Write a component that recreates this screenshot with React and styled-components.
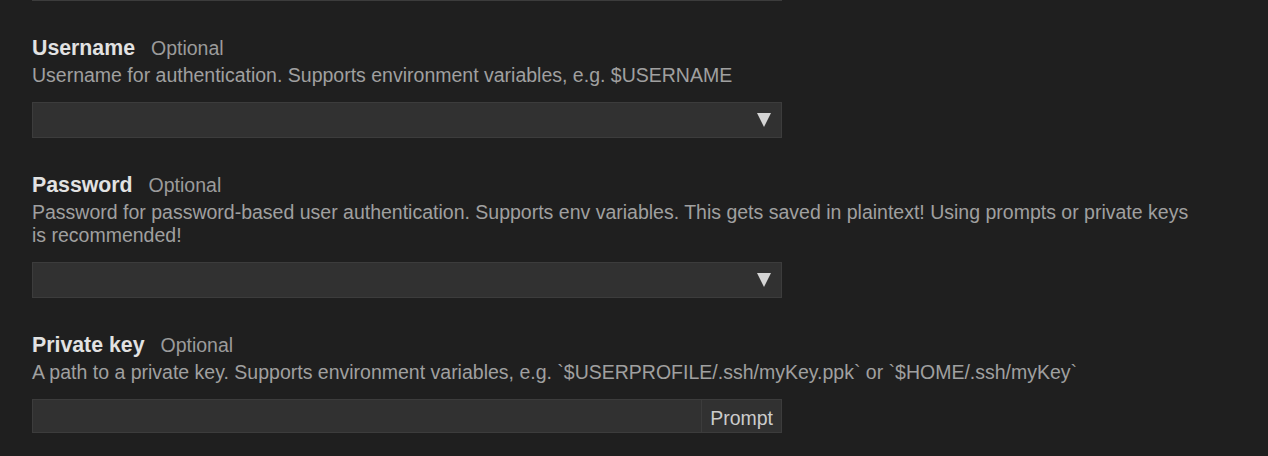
import React from 'react';
import styled, { createGlobalStyle } from 'styled-components';

const GlobalStyle = createGlobalStyle`
  html, body {
    margin: 0;
    padding: 0;
    background: #1f1f1f;
  }
  body {
    font-family: "Liberation Sans", Arial, sans-serif;
  }
`;

const settings = [
  {
    id: 'username',
    title: 'Username',
    description: 'Username for authentication. Supports environment variables, e.g. $USERNAME',
    kind: 'select',
  },
  {
    id: 'password',
    title: 'Password',
    description:
      'Password for password-based user authentication. Supports env variables. This gets saved in plaintext! Using prompts or private keys is recommended!',
    kind: 'select',
  },
  {
    id: 'privateKey',
    title: 'Private key',
    description:
      'A path to a private key. Supports environment variables, e.g. `$USERPROFILE/.ssh/myKey.ppk` or `$HOME/.ssh/myKey`',
    kind: 'prompt',
  },
];

const App = () => {
  return (
    <>
      <GlobalStyle />
      <Page>
        <PrevFieldEdge />
        {settings.map((s) => (
          <Setting key={s.id}>
            <TitleRow>
              <Title>{s.title}</Title>
              <Optional>Optional</Optional>
            </TitleRow>
            <Description>{s.description}</Description>
            {s.kind === 'select' ? (
              <Select>
                <Arrow viewBox="0 0 14 14">
                  <polygon points="0,0 14,0 7,14" />
                </Arrow>
              </Select>
            ) : (
              <InputRow>
                <TextField />
                <PromptButton>Prompt</PromptButton>
              </InputRow>
            )}
          </Setting>
        ))}
      </Page>
    </>
  );
};

const Page = styled.div`
  padding: 0 0 0 32px;
  width: 1170px;
`;

const PrevFieldEdge = styled.div`
  width: 750px;
  height: 1px;
  background: #3c3c3c;
`;

const Setting = styled.section`
  padding-top: 33px;
  display: flex;
  flex-direction: column;
`;

const TitleRow = styled.div`
  display: flex;
  align-items: baseline;
  gap: 16px;
  height: 28px;
  line-height: 28px;
  margin-bottom: 2px;
`;

const Title = styled.span`
  font-size: 21.3px;
  font-weight: bold;
  color: #e2e2e2;
`;

const Optional = styled.span`
  font-size: 19.5px;
  color: #9b9b9b;
`;

const Description = styled.div`
  font-size: 19.5px;
  line-height: 23.5px;
  color: #a0a0a0;
  margin-bottom: 14px;
`;

const Select = styled.div`
  box-sizing: border-box;
  width: 750px;
  height: 36px;
  background: #313131;
  border: 1px solid #3c3c3c;
  display: flex;
  align-items: center;
  justify-content: flex-end;
  padding-right: 10px;
`;

const Arrow = styled.svg`
  width: 14px;
  height: 14px;
  fill: #d4d4d4;
`;

const InputRow = styled.div`
  box-sizing: border-box;
  width: 750px;
  height: 34px;
  margin-top: 1px;
  background: #313131;
  border: 1px solid #3c3c3c;
  display: flex;
`;

const TextField = styled.div`
  flex: 1;
`;

const PromptButton = styled.div`
  border-left: 1px solid #3c3c3c;
  padding: 4px 8px 0;
  display: flex;
  align-items: center;
  font-size: 19.5px;
  color: #cccccc;
`;

export default App;
